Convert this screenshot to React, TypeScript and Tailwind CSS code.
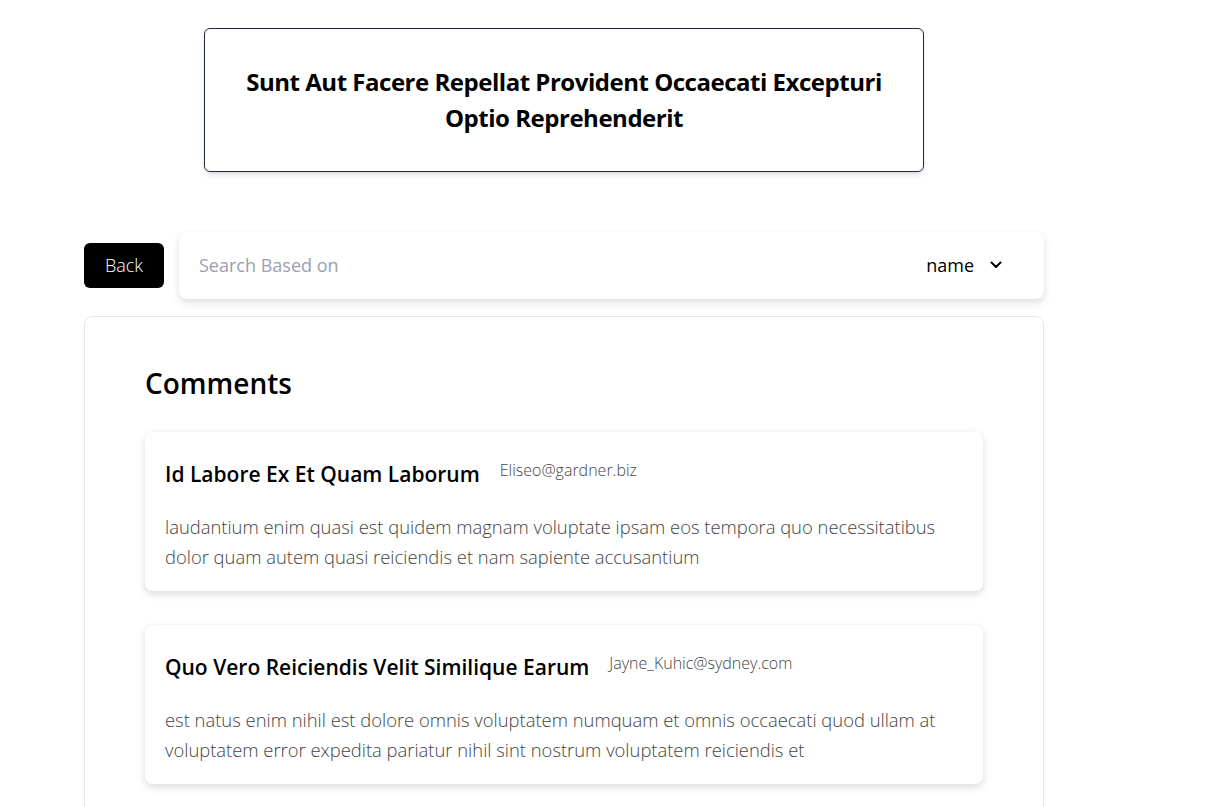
import React from "react";

const comments = [
  {
    name: "Id Labore Ex Et Quam Laborum",
    email: "Eliseo@gardner.biz",
    body: "laudantium enim quasi est quidem magnam voluptate ipsam eos tempora quo necessitatibus dolor quam autem quasi reiciendis et nam sapiente accusantium",
  },
  {
    name: "Quo Vero Reiciendis Velit Similique Earum",
    email: "Jayne_Kuhic@sydney.com",
    body: "est natus enim nihil est dolore omnis voluptatem numquam et omnis occaecati quod ullam at voluptatem error expedita pariatur nihil sint nostrum voluptatem reiciendis et",
  },
];

export default function App() {
  return (
    <div
      className="min-h-[807px] bg-white text-black"
      style={{ fontFamily: "'Open Sans', Lato, sans-serif" }}
    >
      <div className="ml-[84px] w-[960px] pt-[28px]">
        <div className="mx-auto w-[720px] rounded-[6px] border border-gray-800 py-[35px] px-8 text-center shadow-md">
          <h1 className="text-[24px] font-bold leading-[36px] tracking-[-0.02em]">
            Sunt Aut Facere Repellat Provident Occaecati Excepturi Optio Reprehenderit
          </h1>
        </div>

        <div className="mt-[60px] flex items-center gap-[15px]">
          <button className="h-[45px] w-[80px] rounded-[6px] bg-black text-[18px] font-light text-white">
            Back
          </button>
          <div className="flex h-[67px] flex-1 items-center rounded-[8px] bg-white pl-[20px] pr-[42px] shadow-[0_4px_8px_rgba(0,0,0,0.12),0_0_2px_rgba(0,0,0,0.05)]">
            <span className="flex-1 text-[18px] text-gray-400">Search Based on</span>
            <span className="text-[18px] text-black">name</span>
            <svg className="ml-[16px] mt-[-2px]" width="12" height="8" viewBox="0 0 12 8" fill="none">
              <path d="M1.5 1.5 L6 6 L10.5 1.5" stroke="black" strokeWidth="2" strokeLinecap="round" strokeLinejoin="round" />
            </svg>
          </div>
        </div>

        <div className="mt-[17px] rounded-[8px] border border-gray-200 px-[60px] pt-[46px] pb-[40px]">
          <h2 className="text-[28px] font-semibold leading-[40px]">Comments</h2>
          <div className="mt-[29px] flex flex-col gap-[34px]">
            {comments.map((c) => (
              <div
                key={c.email}
                className="rounded-[8px] bg-white px-[20px] pt-[26px] pb-[19px] shadow-[0_3px_8px_rgba(0,0,0,0.15)]"
              >
                <div className="flex items-start gap-[20px]">
                  <h3 className="text-[21px] font-semibold leading-[32px] text-black">{c.name}</h3>
                  <span className="text-[16px] font-light leading-[24px] text-[#444]">{c.email}</span>
                </div>
                <p className="mt-[22px] text-[18.4px] font-light leading-[30px] text-[#444]">{c.body}</p>
              </div>
            ))}
          </div>
        </div>
      </div>
    </div>
  );
}
